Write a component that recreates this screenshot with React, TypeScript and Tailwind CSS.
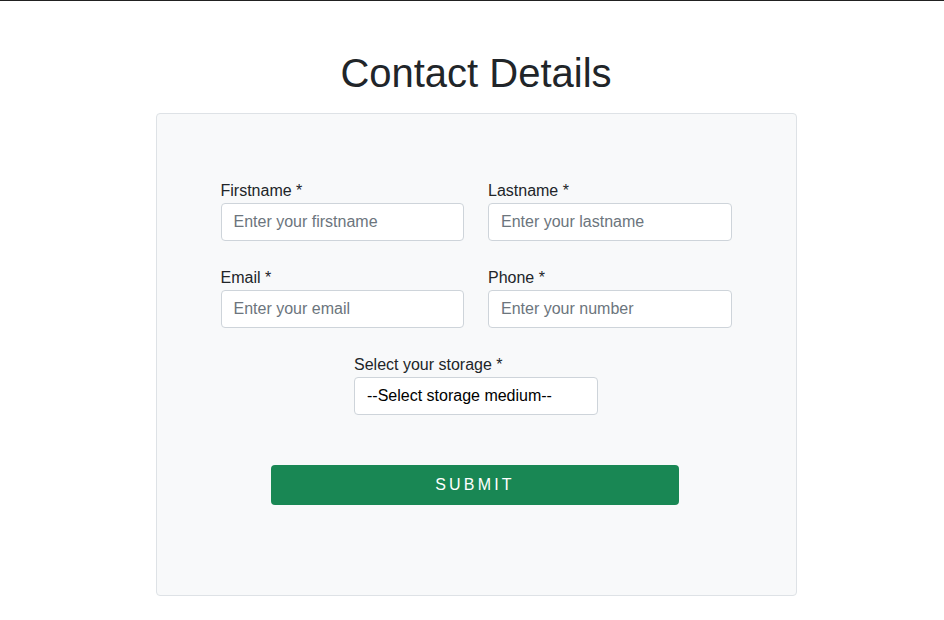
export default function App() {
  return (
    <div className="min-h-[620px] bg-white border-t border-[#212121] pl-[8px] font-['Liberation_Sans',Arial,sans-serif] text-[#212529]">
      <h2 className="pt-[48px] text-center text-[40px] leading-[48px] font-normal">Contact Details</h2>
      <div className="mx-auto mt-[16px] w-[641px] rounded border border-[#dee2e6] bg-[#f8f9fa] px-[64px] pt-[65px] pb-[90px]">
        <div className="grid grid-cols-2 gap-x-[24px] gap-y-[25px]">
          <Field label="Firstname *" placeholder="Enter your firstname" />
          <Field label="Lastname *" placeholder="Enter your lastname" />
          <Field label="Email *" placeholder="Enter your email" />
          <Field label="Phone *" placeholder="Enter your number" />
        </div>
        <div className="mt-[25px] flex justify-center">
          <div className="w-[244px]">
            <label className="block text-base leading-6">Select your storage *</label>
            <select className="block h-[38px] w-full appearance-none rounded border border-[#ced4da] bg-white px-[12px] text-base text-black outline-none">
              <option>--Select storage medium--</option>
              <option>Cloud</option>
              <option>Hard Drive</option>
              <option>USB</option>
            </select>
          </div>
        </div>
        <div className="mt-[50px] flex justify-center pr-[2px]">
          <button className="h-[40px] w-[408px] rounded bg-[#198754] text-base tracking-[3.2px] text-white">SUBMIT</button>
        </div>
      </div>
    </div>
  )
}

function Field({ label, placeholder }: { label: string; placeholder: string }) {
  return (
    <div>
      <label className="block text-base leading-6">{label}</label>
      <input
        placeholder={placeholder}
        className="block h-[38px] w-full rounded border border-[#ced4da] bg-white px-[12px] text-base outline-none placeholder:text-[#6c757d]"
      />
    </div>
  )
}
